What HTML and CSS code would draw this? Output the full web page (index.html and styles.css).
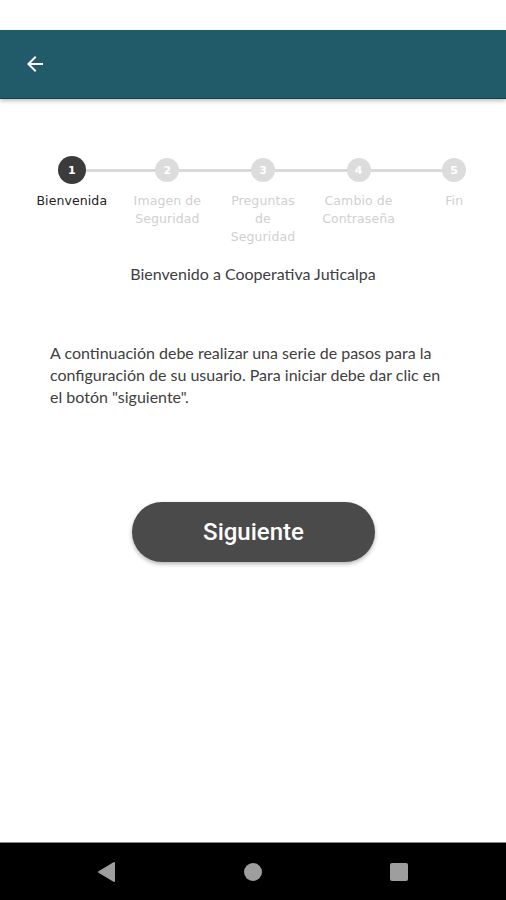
FILE: index.html
```html
<!DOCTYPE html>
<html lang="es">
<head>
  <meta charset="UTF-8">
  <meta name="viewport" content="width=device-width, initial-scale=1.0">
  <title>Bienvenida</title>
  <link rel="stylesheet" href="styles.css">
</head>
<body>
  <div class="status"></div>

  <header class="appbar">
    <button class="back" aria-label="Atrás">
      <svg width="24" height="24" viewBox="0 0 24 24"><path d="M20 11H7.83l5.59-5.59L12 4l-8 8 8 8 1.41-1.41L7.83 13H20v-2z" fill="#fff"/></svg>
    </button>
  </header>

  <main class="content">
    <ol class="stepper">
      <li class="step active"><span class="dot">1</span><span class="label">Bienvenida</span></li>
      <li class="step"><span class="dot">2</span><span class="label">Imagen de Seguridad</span></li>
      <li class="step"><span class="dot">3</span><span class="label">Preguntas de Seguridad</span></li>
      <li class="step"><span class="dot">4</span><span class="label">Cambio de Contraseña</span></li>
      <li class="step"><span class="dot">5</span><span class="label">Fin</span></li>
    </ol>

    <p class="welcome">Bienvenido a Cooperativa Juticalpa</p>

    <p class="intro">A continuación debe realizar una serie de pasos para la configuración de su usuario. Para iniciar debe dar clic en el botón "siguiente".</p>

    <div class="actions">
      <button class="next">Siguiente</button>
    </div>
  </main>

  <nav class="navbar">
    <svg width="20" height="22" viewBox="0 0 20 22"><path d="M18 2v18L3 11z" fill="#9e9e9e" stroke="#9e9e9e" stroke-width="2" stroke-linejoin="round"/></svg>
    <svg width="20" height="20" viewBox="0 0 20 20"><circle cx="10" cy="10" r="9" fill="#9e9e9e"/></svg>
    <svg width="20" height="20" viewBox="0 0 20 20"><rect x="1" y="1" width="18" height="18" rx="2" fill="#9e9e9e"/></svg>
  </nav>
</body>
</html>
```

FILE: styles.css
```css
* { box-sizing: border-box; }
html, body { margin: 0; height: 100%; }
body { font-family: Lato, "Open Sans", sans-serif; background: #fff; display: flex; flex-direction: column; width: 506px; height: 900px; overflow: hidden; }

.status { height: 30px; background: #fff; }
.appbar { height: 69px; background: #215a69; display: flex; align-items: center; padding-left: 23px; box-shadow: 0 2px 4px rgba(0,0,0,0.25); border-bottom: 1px solid #163f4a; }
.back { background: none; border: none; padding: 0; width: 24px; height: 24px; cursor: pointer; display: flex; }

.content { flex: 1; }

.stepper { list-style: none; margin: 0; padding: 57px 4px 0 24px; display: grid; grid-template-columns: repeat(5, 1fr); }
.step { position: relative; display: flex; flex-direction: column; align-items: center; text-align: center; }
.step::before { content: ""; position: absolute; top: 13px; left: 50%; width: 100%; height: 3px; background: #dadada; }
.step:last-child::before { display: none; }
.dot { position: relative; width: 24px; height: 24px; margin-top: 2px; margin-bottom: 2px; border-radius: 50%; background: #dcdcdc; color: #fff; font-family: "DejaVu Sans", sans-serif; font-size: 11px; font-weight: 700; display: flex; align-items: center; justify-content: center; }
.active .dot { width: 28px; height: 28px; margin: 0; background: #3b3b3b; }
.label { margin-top: 8px; font-family: "DejaVu Sans", sans-serif; font-size: 12.5px; line-height: 18px; color: #d0d0d0; padding: 0 9px; letter-spacing: 0.1px; }
.active .label { color: #222; }

.welcome { margin: 18px 0 0; text-align: center; font-size: 16px; line-height: 20px; color: #404040; }
.intro { margin: 58px 50px 0; font-size: 16px; line-height: 22px; color: #404040; }

.actions { display: flex; justify-content: center; padding-left: 1px; margin-top: 94px; }
.next { width: 243px; height: 60px; border: none; border-radius: 30px; background: #4a4a4a; color: #fff; font-family: Roboto, sans-serif; font-size: 24px; font-weight: 500; box-shadow: 0 2px 4px rgba(0,0,0,0.3); cursor: pointer; }

.navbar { height: 58px; background: #000; display: flex; align-items: center; justify-content: space-between; padding: 0 97px 0 96px; border-top: 1px solid #888; }
```
